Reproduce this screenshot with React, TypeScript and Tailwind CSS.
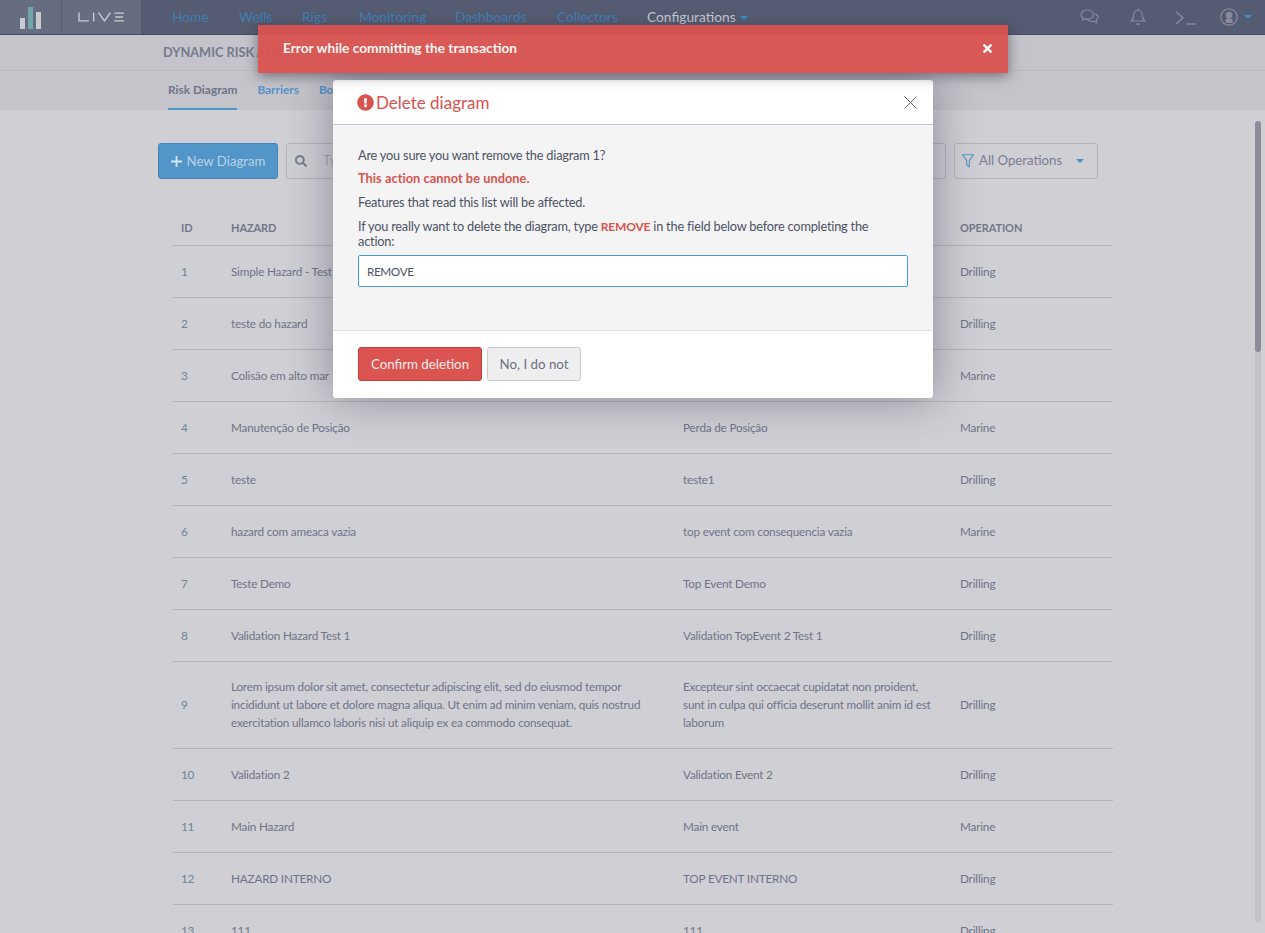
import { FaExclamationCircle, FaSearch, FaTimes } from 'react-icons/fa';

const navLinks = [
    { label: 'Home', width: 'w-[67px]' },
    { label: 'Wells', width: 'w-[63px]' },
    { label: 'Rigs', width: 'w-[57px]' },
    { label: 'Monitoring', width: 'w-[96px]' },
    { label: 'Dashboards', width: 'w-[102px]' },
    { label: 'Collectors', width: 'w-[90px]' },
];

const rows = [
    { id: '1', hazard: 'Simple Hazard - Test', event: 'Simple Top Event', operation: 'Drilling' },
    { id: '2', hazard: 'teste do hazard', event: 'teste do top event', operation: 'Drilling' },
    { id: '3', hazard: 'Colisão em alto mar', event: 'Colisão', operation: 'Marine' },
    { id: '4', hazard: 'Manutenção de Posição', event: 'Perda de Posição', operation: 'Marine' },
    { id: '5', hazard: 'teste', event: 'teste1', operation: 'Drilling' },
    { id: '6', hazard: 'hazard com ameaca vazia', event: 'top event com consequencia vazia', operation: 'Marine' },
    { id: '7', hazard: 'Teste Demo', event: 'Top Event Demo', operation: 'Drilling' },
    { id: '8', hazard: 'Validation Hazard Test 1', event: 'Validation TopEvent 2 Test 1', operation: 'Drilling' },
];

const rowsAfter = [
    { id: '10', hazard: 'Validation 2', event: 'Validation Event 2', operation: 'Drilling' },
    { id: '11', hazard: 'Main Hazard', event: 'Main event', operation: 'Marine' },
    { id: '12', hazard: 'HAZARD INTERNO', event: 'TOP EVENT INTERNO', operation: 'Drilling' },
    { id: '13', hazard: '111', event: '111', operation: 'Drilling' },
];

function Row({ id, hazard, event, operation }: { id: string; hazard: string; event: string; operation: string }) {
    return (
        <tr className="h-[52px] border-b border-[#b4b4bb]">
            <td className="pt-[2px] pl-2 text-[#6b8496]">{id}</td>
            <td className="pt-[2px] pl-2">{hazard}</td>
            <td className="pt-[2px] pl-2">{event}</td>
            <td className="pt-[2px] pl-2">{operation}</td>
        </tr>
    );
}

function Logo() {
    return (
        <div className="flex h-full">
            <div className="flex w-[62px] items-end justify-center gap-[3px] border-r border-[#565c71] bg-[#676d81] pb-[5px]">
                <span className="h-[11px] w-[5px] bg-[#c9c9d0]" />
                <span className="h-[22px] w-[5px] bg-[#6fa6a8]" />
                <span className="h-[17px] w-[5px] bg-[#c9c9d0]" />
            </div>
            <div className="flex w-[79px] items-center justify-center bg-[#676d81]">
                <svg width="47" height="10" viewBox="0 0 48 10" fill="none" stroke="#c9c9d0" strokeWidth="1.4">
                    <path d="M1 0.5V9H11" />
                    <path d="M16 0.5V9.5" />
                    <path d="M21 0.5L27 9L33 0.5" />
                    <path d="M37 1H47M38 5H46M37 9H47" />
                </svg>
            </div>
        </div>
    );
}

function NavIcons() {
    return (
        <div className="ml-auto flex items-center pr-[13px] text-[#878b9c]">
            <svg className="mr-[31px]" width="19" height="16" viewBox="0 0 19 16" fill="none" stroke="currentColor" strokeWidth="1.2">
                <path d="M7.5 1C3.9 1 1 3 1 5.6c0 1.4.8 2.6 2 3.4L2.6 11l2.4-1.2c.8.2 1.6.3 2.5.3 3.6 0 6-2 6-4.5S11.1 1 7.5 1z" />
                <path d="M14.8 4.6c1.9.7 3.2 2 3.2 3.7 0 1.2-.7 2.2-1.7 3l.4 2.4-2.6-1.5c-.7.2-1.4.2-2.1.2-2 0-3.7-.7-4.7-1.9" />
            </svg>
            <svg className="mr-[29px]" width="16" height="18" viewBox="0 0 16 18" fill="none" stroke="currentColor" strokeWidth="1.2">
                <path d="M8 2.5c-2.8 0-4.3 2-4.3 4.7 0 3-1 4.5-2.5 5.8h13.6c-1.5-1.3-2.5-2.8-2.5-5.8 0-2.7-1.5-4.7-4.3-4.7z" />
                <path d="M8 .5v2" />
                <path d="M6.5 15.5c.4 1 2.6 1 3 0" strokeWidth="1.5" />
            </svg>
            <svg className="mt-[1px] mr-[24px]" width="21" height="14" viewBox="0 0 21 14" fill="none" stroke="currentColor" strokeWidth="1.4">
                <path d="M1 0.8L8 6.8L1 13" />
                <path d="M11 13H21" />
            </svg>
            <svg className="mr-[6px]" width="18" height="18" viewBox="0 0 18 18">
                <circle cx="9" cy="9" r="8.2" fill="none" stroke="#878b9c" strokeWidth="1.2" />
                <circle cx="9" cy="7" r="3.3" fill="#878b9c" />
                <path d="M5.5 15v-2.5c0-1.5 1.5-2.5 3.5-2.5s3.5 1 3.5 2.5V15z" fill="#878b9c" />
            </svg>
            <span className="h-0 w-0 border-x-[4px] border-t-[4px] border-x-transparent border-t-[#3b8fc4]" />
        </div>
    );
}

function ErrorToast() {
    return (
        <div className="absolute top-[25px] left-[258px] flex h-[48px] w-[750px] items-center justify-between bg-[#d9534f]/95 pr-[14px] pb-[1px] pl-[25px] text-[13.7px] font-bold tracking-normal text-[#fdf3f3] shadow-[0_3px_12px_rgba(40,40,60,0.55)]">
            <span>Error while committing the transaction</span>
            <FaTimes className="text-[13px] text-white" />
        </div>
    );
}

function DeleteModal() {
    return (
        <div className="absolute top-[80px] left-[333px] w-[600px] rounded-[3px] bg-white text-[12.75px] tracking-[-0.2px] text-[#4d5266] shadow-[0_0_45px_rgba(50,50,75,0.45)]">
            <div className="flex h-[45px] items-center justify-between border-b border-[#c5c6cf] pt-[1px] pr-[16px] pl-[24px]">
                <h4 className="flex items-center text-[17px] tracking-normal text-[#d9534f]">
                    <FaExclamationCircle className="text-[17px]" />
                    <span className="ml-[2px]">Delete diagram</span>
                </h4>
                <svg width="13" height="13" viewBox="0 0 13 13" stroke="#4d5266" strokeWidth="0.9">
                    <path d="M0.5 0.5L12.5 12.5M12.5 0.5L0.5 12.5" />
                </svg>
            </div>
            <div className="h-[206px] border-b border-[#dfdfe4] bg-[#f4f4f4] px-[25px] pt-[21px]">
                <p className="leading-[18px]">Are you sure you want remove the diagram 1?</p>
                <p className="mt-[5px] leading-[18px] font-bold tracking-[0.05px] text-[#d9534f]">This action cannot be undone.</p>
                <p className="mt-[6px] leading-[18px]">Features that read this list will be affected.</p>
                <p className="mt-[8px] leading-[15px]">
                    If you really want to delete the diagram, type <b className="text-[12px] text-[#d9534f]">REMOVE</b> in the field below before completing the<br />
                    action:
                </p>
                <input
                    readOnly
                    value="REMOVE"
                    className="mt-[6px] block h-[32px] w-[550px] rounded-[2px] border border-[#4a9ad4] bg-white px-[8px] text-[11.75px] tracking-[-0.4px] text-[#4d5266] outline-none"
                />
            </div>
            <div className="flex h-[67px] items-start gap-[5px] px-[25px] pt-[16px] tracking-normal">
                <button className="h-[34px] w-[124px] rounded-[3px] border border-[#c13f3b] bg-[#dc5450] pt-[1px] text-[13.3px] text-[#fbeeee]">Confirm deletion</button>
                <button className="h-[34px] w-[94px] rounded-[3px] border border-[#c9cad2] bg-[#eeeeee] pt-[1px] text-[13.3px] text-[#6b7084]">No, I do not</button>
            </div>
        </div>
    );
}

export default function App() {
    return (
        <div className="relative h-[933px] overflow-hidden bg-[#d0cfd4] font-[Lato,sans-serif] text-[11.75px] tracking-[-0.2px] text-[#6f7488]">
            <header className="flex h-[35px] border-b border-[#474d60] bg-[#555b70] text-[13.75px] tracking-normal">
                <Logo />
                <nav className="ml-[31px] flex items-center">
                    {navLinks.map(link => (
                        <a key={link.label} className={`${link.width} text-[#3f7fb5]`}>{link.label}</a>
                    ))}
                    <a className="flex items-center gap-[4px] text-[#c4c6cf]">
                        Configurations
                        <span className="mt-[2px] h-0 w-0 border-x-[4px] border-t-[4px] border-x-transparent border-t-[#3b8fc4]" />
                    </a>
                </nav>
                <NavIcons />
            </header>

            <div className="flex h-[36px] items-center border-b border-[#bbbbc1] bg-[#c5c4ca] pt-[1px] pl-[163px] text-[12.75px] font-bold tracking-normal text-[#767a8d] shadow-[0_1px_2px_rgba(80,80,100,0.2)]">
                DYNAMIC RISK ADVISOR
                <span className="ml-[47px]">Editor</span>
            </div>

            <div className="flex h-[39px] items-stretch gap-[20px] bg-[#c5c4ca] pl-[168px] text-[11.85px] font-bold tracking-normal">
                <a className="flex items-center border-b-2 border-[#4f96c9] text-[#6f7488]">Risk Diagram</a>
                <a className="flex items-center border-b-2 border-transparent text-[#5595c9]">Barriers</a>
                <a className="flex items-center border-b-2 border-transparent text-[#5595c9]">Bowties</a>
            </div>

            <div className="flex items-stretch pt-[33px] pl-[158px] tracking-normal">
                <button className="flex h-[36px] w-[120px] items-center justify-center gap-[5px] rounded-[3px] border border-[#4486b8] bg-[#5296c9] pt-[1px] text-[13.2px] text-[#b9d3e8]">
                    <svg width="11" height="11" viewBox="0 0 11 11" stroke="#d7e5f1" strokeWidth="1.8">
                        <path d="M5.5 0V11M0 5.5H11" />
                    </svg>
                    New Diagram
                </button>
                <div className="ml-[8px] flex h-[36px] w-[660px] items-center rounded-[3px] border border-[#b4b4bd] pb-[1px] pl-[8px] text-[13.2px] text-[#a4a6b3]">
                    <FaSearch className="text-[12px] text-[#777b8e]" />
                    <span className="ml-[16px]">Type to search</span>
                </div>
                <div className="ml-[8px] flex h-[36px] w-[144px] items-center rounded-[3px] border border-[#b4b4bd] pl-[7px] text-[13.2px] text-[#7a7e91]">
                    <svg width="12" height="14" viewBox="0 0 12 14" fill="none" stroke="#5296c9" strokeWidth="1.1">
                        <path d="M0.5 0.8H11.5L7.3 6.5V12.8L4.7 11.3V6.5Z" />
                    </svg>
                    <span className="mb-[1px] ml-[5px]">All Operations</span>
                    <span className="mr-[13px] ml-auto h-0 w-0 border-x-[4px] border-t-[4px] border-x-transparent border-t-[#4a8fc4]" />
                </div>
            </div>

            <table className="mt-[31px] ml-[173px] w-[940px] table-fixed border-collapse text-left">
                <colgroup>
                    <col className="w-[50px]" />
                    <col className="w-[452px]" />
                    <col className="w-[277px]" />
                    <col className="w-[161px]" />
                </colgroup>
                <thead>
                    <tr className="h-[35px] border-b border-[#b4b4bb] text-[11px] font-bold tracking-[-0.1px] text-[#72768a]">
                        <th className="pt-[2px] pl-2">ID</th>
                        <th className="pt-[2px] pl-2">HAZARD</th>
                        <th className="pt-[2px] pl-2">TOP EVENT</th>
                        <th className="pt-[2px] pl-2">OPERATION</th>
                    </tr>
                </thead>
                <tbody>
                    {rows.map(row => <Row key={row.id} {...row} />)}
                    <tr className="h-[87px] border-b border-[#b4b4bb] leading-[18px]">
                        <td className="pl-2 text-[#6b8496]">9</td>
                        <td className="pl-2">
                            Lorem ipsum dolor sit amet, consectetur adipiscing elit, sed do eiusmod tempor<br />
                            incididunt ut labore et dolore magna aliqua. Ut enim ad minim veniam, quis nostrud<br />
                            exercitation ullamco laboris nisi ut aliquip ex ea commodo consequat.
                        </td>
                        <td className="pl-2">
                            Excepteur sint occaecat cupidatat non proident,<br />
                            sunt in culpa qui officia deserunt mollit anim id est<br />
                            laborum
                        </td>
                        <td className="pl-2">Drilling</td>
                    </tr>
                    {rowsAfter.map(row => <Row key={row.id} {...row} />)}
                </tbody>
            </table>

            <div className="absolute top-[121px] right-[4px] h-[802px] w-[6px] rounded-[3px] bg-[#c3c3c8]">
                <div className="h-[231px] w-[6px] rounded-[3px] bg-[#8b8b99]" />
            </div>

            <DeleteModal />
            <ErrorToast />
        </div>
    );
}
